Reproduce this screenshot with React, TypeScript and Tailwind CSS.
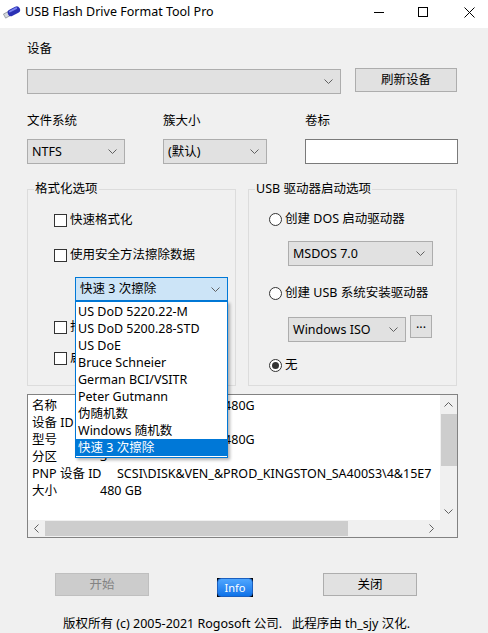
import React from 'react';

const Chevron: React.FC<{ className?: string }> = ({ className = '' }) => (
  <svg width="9" height="5" viewBox="0 0 9 5" className={className}>
    <polyline points="0.5,0.5 4.5,4.5 8.5,0.5" fill="none" stroke="#606060" strokeWidth="1" />
  </svg>
);

// native-looking combo box, sizes passed as full class strings
const Combo: React.FC<{ size: string; text?: string; active?: boolean }> = ({ size, text, active }) => (
  <div
    className={
      size +
      ' flex items-center justify-between pl-[4px] pr-[7px] border ' +
      (active ? 'bg-[#cce4f7] border-[#0078d7]' : 'bg-[#e1e1e1] border-[#adadad]')
    }
  >
    <span className="whitespace-nowrap">{text}</span>
    <Chevron />
  </div>
);

const Check: React.FC<{ label: string }> = ({ label }) => (
  <div className="flex items-center h-[16px] gap-[3px]">
    <span className="w-[13px] h-[13px] border border-[#333333] bg-white shrink-0" />
    <span className="whitespace-nowrap">{label}</span>
  </div>
);

const Radio: React.FC<{ label: string; checked?: boolean }> = ({ label, checked }) => (
  <div className="flex items-center h-[16px] gap-[3px]">
    <span className="w-[13px] h-[13px] rounded-full border border-[#333333] bg-white flex items-center justify-center shrink-0">
      {checked && <span className="w-[7px] h-[7px] rounded-full bg-[#333333]" />}
    </span>
    <span className="whitespace-nowrap">{label}</span>
  </div>
);

const wipeMethods = [
  'US DoD 5220.22-M',
  'US DoD 5200.28-STD',
  'US DoE',
  'Bruce Schneier',
  'German BCI/VSITR',
  'Peter Gutmann',
  '伪随机数',
  'Windows 随机数',
  '快速 3 次擦除',
];

const driveInfo = [
  { label: '名称', value: 'KINGSTON SA400S37480G', wide: false },
  { label: '设备 ID', value: '\\\\.\\PhysicalDrive1', wide: false },
  { label: '型号', value: 'KINGSTON SA400S37480G', wide: false },
  { label: '分区', value: '3', wide: false },
  { label: 'PNP 设备 ID', value: 'SCSI\\DISK&VEN_&PROD_KINGSTON_SA400S3\\4&15E7', wide: true },
  { label: '大小', value: '480 GB', wide: false },
];

export default function App() {
  return (
    <div className="w-[488px] h-[633px] bg-[#f0f0f0] text-black text-[12.5px] leading-[16px] font-['Noto_Sans','Noto_Sans_CJK_SC',sans-serif] overflow-hidden flex flex-col">
      {/* title bar */}
      <div className="h-[28px] bg-white flex items-center shrink-0">
        <svg width="18" height="14" viewBox="0 0 18 14" className="ml-[3px] mb-[4px]">
          <g transform="rotate(-28 9 7)">
            <rect x="0.5" y="4.8" width="5" height="4.6" fill="#d4d8de" stroke="#7a7f88" strokeWidth="0.6" />
            <rect x="4.5" y="3.8" width="13" height="6.8" rx="3.2" fill="#2b31b5" />
            <rect x="6.5" y="4.7" width="9" height="1.8" rx="0.9" fill="#7b84ef" />
          </g>
        </svg>
        <span className="ml-[4px] mb-[4px]">USB Flash Drive Format Tool Pro</span>
        <div className="ml-auto flex items-center mb-[4px]">
          <span className="w-[10px] h-[1px] bg-black mr-[34px]" />
          <span className="w-[10px] h-[10px] border border-black mr-[36px]" />
          <svg width="11" height="11" viewBox="0 0 11 11" className="mr-[13px]">
            <path d="M0.5 0.5 L10.5 10.5 M10.5 0.5 L0.5 10.5" stroke="#000" strokeWidth="1" />
          </svg>
        </div>
      </div>

      <div className="pl-[27px] pr-[30px] flex flex-col">
        <div className="mt-[13px] h-[16px]">设备</div>

        <div className="mt-[11px] flex items-start">
          <div className="mt-[1px]">
            <Combo size="w-[314px] h-[25px]" />
          </div>
          <button className="ml-[14px] w-[102px] h-[24px] bg-[#e1e1e1] border border-[#adadad] flex items-center justify-center">
            刷新设备
          </button>
        </div>

        <div className="mt-[19px] flex h-[16px]">
          <span className="w-[136px]">文件系统</span>
          <span className="w-[142px]">簇大小</span>
          <span>卷标</span>
        </div>

        <div className="mt-[10px] flex">
          <Combo size="w-[98px] h-[25px]" text="NTFS" />
          <div className="ml-[38px]">
            <Combo size="w-[104px] h-[25px]" text="(默认)" />
          </div>
          <div className="ml-[38px] w-[153px] h-[25px] bg-white border border-[#7a7a7a]" />
        </div>

        {/* option groups */}
        <div className="mt-[17px] flex gap-[12px]">
          <fieldset className="w-[209px] h-[205px] border border-[#dcdcdc] px-[6px] pt-0 pb-0 flex flex-col">
            <legend className="px-[1px] h-[16px]">格式化选项</legend>
            <div className="ml-[20px] mt-[15px]">
              <Check label="快速格式化" />
            </div>
            <div className="ml-[20px] mt-[19px]">
              <Check label="使用安全方法擦除数据" />
            </div>
            <div className="ml-[41px] mt-[14px] relative w-[153px]">
              <Combo size="w-[153px] h-[24px]" text="快速 3 次擦除" active />
              <div className="absolute z-10 left-0 top-[24px] w-[153px] bg-white border border-[#0078d7] shadow-[2px_2px_3px_rgba(0,0,0,0.3)] py-[1px]">
                {wipeMethods.map((m, i) => (
                  <div
                    key={m}
                    className={
                      'h-[17px] leading-[17px] pl-[2px] whitespace-nowrap ' +
                      (i === wipeMethods.length - 1 ? 'bg-[#0078d7] text-white' : '')
                    }
                  >
                    {m}
                  </div>
                ))}
              </div>
            </div>
            <div className="ml-[20px] mt-[18px]">
              <Check label="扫描驱动器" />
            </div>
            <div className="ml-[20px] mt-[15px]">
              <Check label="启用压缩" />
            </div>
          </fieldset>

          <fieldset className="w-[209px] h-[205px] border border-[#dcdcdc] px-[6px] pt-0 pb-0 flex flex-col">
            <legend className="px-[1px] h-[16px]">USB 驱动器启动选项</legend>
            <div className="ml-[14px] mt-[14px]">
              <Radio label="创建 DOS 启动驱动器" />
            </div>
            <div className="ml-[33px] mt-[14px]">
              <Combo size="w-[145px] h-[25px]" text="MSDOS 7.0" />
            </div>
            <div className="ml-[14px] mt-[19px]">
              <Radio label="创建 USB 系统安装驱动器" />
            </div>
            <div className="ml-[33px] mt-[14px] flex items-start">
              <div className="mt-[2px]">
                <Combo size="w-[118px] h-[25px]" text="Windows ISO" />
              </div>
              <button className="ml-[4px] w-[22px] h-[23px] bg-[#e1e1e1] border border-[#adadad] flex items-center justify-center leading-none pb-[4px]">
                ...
              </button>
            </div>
            <div className="ml-[14px] mt-[15px]">
              <Radio label="无" checked />
            </div>
          </fieldset>
        </div>

        {/* drive info box */}
        <div className="mt-[8px] w-[431px] h-[144px] border border-[#828282] bg-white flex flex-col">
          <div className="flex flex-1 min-h-0">
            <div className="flex-1 overflow-hidden pl-[4px] pt-[2px]">
              {driveInfo.map((r) => (
                <div key={r.label} className="flex h-[17px] leading-[17px] whitespace-nowrap">
                  <span className={r.wide ? 'w-[85px] shrink-0' : 'w-[68px] shrink-0'}>{r.label}</span>
                  <span>{r.value}</span>
                </div>
              ))}
            </div>
            <div className="w-[17px] bg-[#f0f0f0] flex flex-col items-center">
              <div className="h-[19px] flex items-center justify-center">
                <Chevron className="rotate-180" />
              </div>
              <div className="w-[16px] h-[52px] bg-[#cdcdcd]" />
              <div className="flex-1" />
              <div className="h-[17px] flex items-center justify-center">
                <Chevron />
              </div>
            </div>
          </div>
          <div className="h-[17px] flex">
            <div className="flex-1 bg-[#f0f0f0] flex items-center">
              <div className="w-[17px] flex justify-center">
                <Chevron className="rotate-90" />
              </div>
              <div className="w-[303px] h-[15px] bg-[#cdcdcd]" />
              <div className="flex-1" />
              <div className="w-[17px] flex justify-center">
                <Chevron className="-rotate-90" />
              </div>
            </div>
            <div className="w-[17px] bg-[#f0f0f0]" />
          </div>
        </div>

        {/* buttons */}
        <div className="mt-[35px] flex items-start">
          <button className="ml-[28px] w-[94px] h-[23px] bg-[#cccccc] border border-[#bfbfbf] text-[#838383] flex items-center justify-center">
            开始
          </button>
          <div className="ml-[68px] mt-[5px] w-[36px] h-[19px] bg-black">
            <div className="w-full h-full rounded-[4px] border border-[#1b5fbf] bg-gradient-to-b from-[#4ea6ff] to-[#0b72e8] text-white text-[11px] flex items-center justify-center">
              Info
            </div>
          </div>
          <button className="ml-[70px] w-[94px] h-[23px] bg-[#e1e1e1] border border-[#adadad] flex items-center justify-center">
            关闭
          </button>
        </div>

        <div className="mt-[19px] ml-[36px] h-[16px] whitespace-nowrap">
          版权所有 (c) 2005-2021 Rogosoft 公司.&nbsp;&nbsp; 此程序由 th_sjy 汉化.
        </div>
      </div>
    </div>
  );
}
